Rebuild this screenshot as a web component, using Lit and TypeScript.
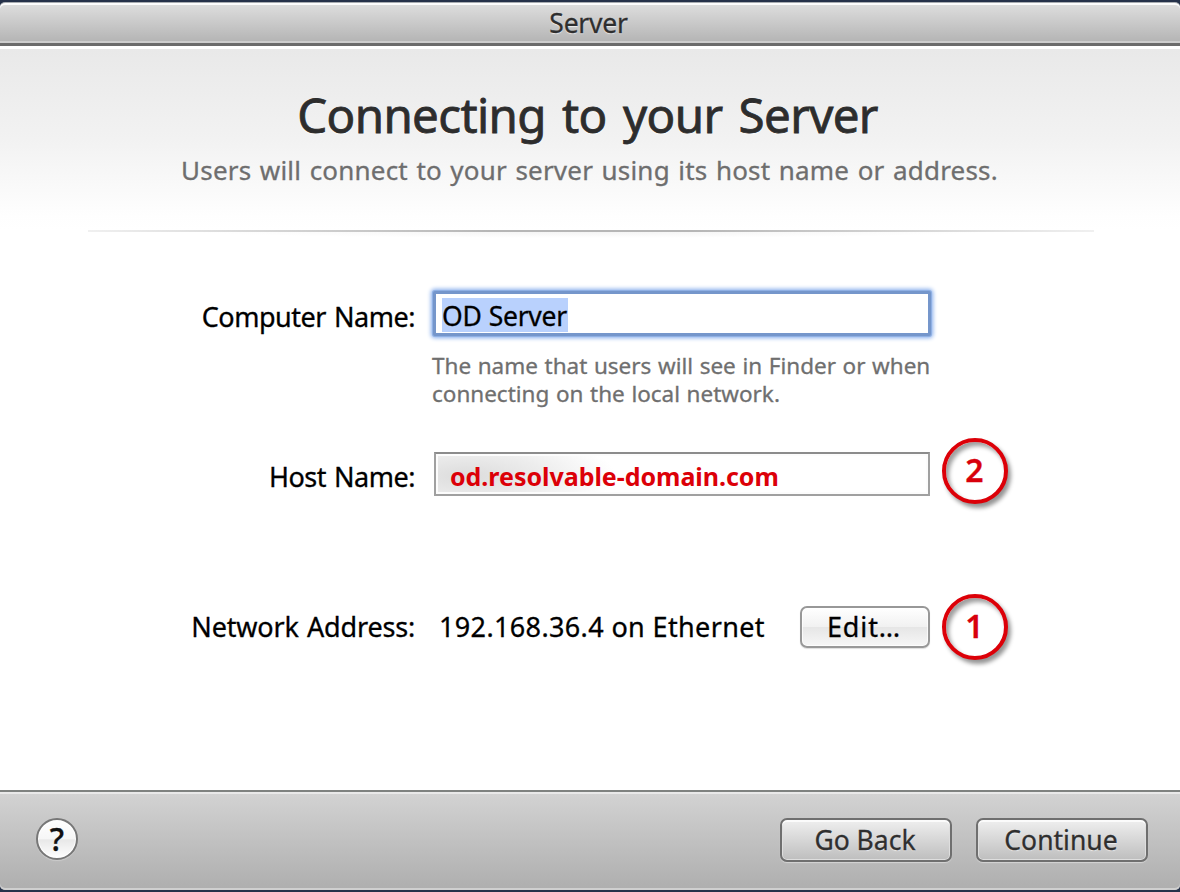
import { LitElement, html, css } from "lit";
import { customElement, property } from "lit/decorators.js";

@customElement("step-badge")
export class StepBadge extends LitElement {
  @property({ type: Number }) step = 1;

  static styles = css`
    :host {
      display: block;
      flex: none;
      width: 66px;
      height: 66px;
    }
    .ring {
      box-sizing: border-box;
      width: 66px;
      height: 66px;
      border: 4px solid #dc0008;
      border-radius: 50%;
      background: #fff;
      color: #d8000c;
      font-size: 32px;
      font-weight: 600;
      line-height: 56px;
      text-align: center;
      text-indent: -1px;
      box-shadow:
        3px 4px 4px rgba(0, 0, 0, 0.42),
        inset 3px 4px 4px rgba(0, 0, 0, 0.38);
    }
  `;

  render() {
    return html`<div class="ring">${this.step}</div>`;
  }
}

@customElement("app-root")
export class AppRoot extends LitElement {
  static styles = css`
    :host {
      display: block;
      width: 1180px;
      height: 892px;
      overflow: hidden;
      background: #26324a;
      font-family: "Noto Sans", "Open Sans", sans-serif;
      color: #000;
      -webkit-text-stroke: 0.3px currentColor;
    }
    * {
      box-sizing: border-box;
    }
    .window {
      display: flex;
      flex-direction: column;
      height: 892px;
      padding: 2px 0;
    }
    .titlebar {
      flex: none;
      height: 44px;
      border-top: 1px solid #a9adb2;
      border-bottom: 3px solid #6b6b6b;
      border-radius: 5px 5px 0 0;
      background: linear-gradient(#dfdfdf, #b3b3b3);
      box-shadow: inset 0 2px #fdfdfd, inset 0 -2px #cdcdcd;
      font-size: 26.5px;
      letter-spacing: -0.25px;
      line-height: 41px;
      text-align: center;
      color: #2e2e2e;
      text-shadow: 0 1px 1px #eee;
      padding-right: 3px;
    }
    .content {
      flex: 1;
      background: #fff;
    }
    .header {
      height: 184px;
      border-top: 3px solid #fff;
      background: linear-gradient(#e9e9e9, #f2f2f2 50%, #fefefe 92%, #fff);
      text-align: center;
      overflow: hidden;
    }
    h1 {
      margin: 33px 0 0;
      padding-right: 5px;
      font-size: 47.5px;
      font-weight: 400;
      letter-spacing: -0.63px;
      word-spacing: 4.5px;
      line-height: 66px;
      color: #2d2d2d;
      -webkit-text-stroke: 0.8px currentColor;
      text-shadow: 0 1px 2px #fff;
    }
    .sub {
      margin: 4px 0 0;
      padding-right: 1px;
      font-size: 26px;
      letter-spacing: 0.2px;
      word-spacing: 1.5px;
      line-height: 36px;
      color: #6e6e6e;
    }
    .rule {
      height: 2px;
      margin: 0 86px 0 88px;
      background: linear-gradient(90deg, #f0f0f0, #b6b6b6 40%, #b6b6b6 60%, #f0f0f0);
    }
    .fade {
      height: 6px;
      margin: 0 200px;
      background: radial-gradient(50% 100% at 50% 0, #f4f4f4, #fff);
    }
    .row {
      display: flex;
      align-items: center;
      font-size: 27px;
      white-space: nowrap;
    }
    .label {
      width: 415px;
      margin-right: 18px;
      text-align: right;
      letter-spacing: -0.48px;
      word-spacing: 1.5px;
    }
    .name {
      height: 45px;
      margin-top: 53px;
      line-height: 39px;
    }
    .name .label,
    .host .label {
      padding-top: 5px;
    }
    .host {
      height: 44px;
      margin-top: 44px;
      line-height: 39px;
    }
    .net {
      height: 42px;
      margin-top: 110px;
      line-height: 39px;
    }
    .net .label,
    .address {
      padding-bottom: 2px;
    }
    .net .label {
      letter-spacing: -0.18px;
    }
    .focus {
      display: flex;
      width: 498px;
      height: 45px;
      padding: 4px 6px;
      border: 3px solid #7596cb;
      border-radius: 2px;
      background: #fff;
      box-shadow: 0 0 0 1px #8fb0e4, 0 0 4px 2px #85acec;
    }
    .selected {
      height: 34px;
      padding-right: 1px;
      background: #b9d1fd;
      font-size: 26.5px;
      letter-spacing: -0.3px;
      word-spacing: 0.8px;
      line-height: 37px;
    }
    .hint {
      margin: 16px 0 0 432px;
      font-size: 22.5px;
      letter-spacing: -0.01px;
      word-spacing: 0.8px;
      line-height: 28px;
      color: #6f6f6f;
    }
    .field {
      width: 496px;
      height: 44px;
      margin-left: 1px;
      padding-left: 14px;
      border: 2px solid #a0a0a0;
      border-top-color: #8c8c8c;
      background:
        radial-gradient(150px 44px at 30px 22px, rgba(218, 218, 218, 0.95), rgba(230, 230, 230, 0.75) 50%, rgba(255, 255, 255, 0)),
        #fff;
      box-shadow: inset 0 0 0 2px #fcfcfc;
      color: #dc0008;
      font-size: 25px;
      font-weight: 700;
      letter-spacing: -0.03px;
      line-height: 45px;
      -webkit-text-stroke: 0;
    }
    .address {
      width: 367px;
      padding-left: 6px;
      letter-spacing: 0.36px;
    }
    step-badge {
      margin-left: 12px;
    }
    .host step-badge {
      margin-bottom: 6px;
    }
    .button {
      border: 2px solid #6f6f6f;
      border-radius: 7px;
      text-align: center;
      font-size: 27px;
      white-space: nowrap;
    }
    .edit {
      width: 130px;
      height: 42px;
      border-color: #989898;
      background: linear-gradient(#fff, #f1f1f1 50%, #e6e6e6 51%, #f6f6f6);
      box-shadow: inset 0 0 0 1px rgba(255, 255, 255, 0.7), 0 1px 1px #ddd;
      letter-spacing: 0.9px;
      line-height: 37px;
      padding-right: 2px;
    }
    .footer {
      flex: none;
      display: flex;
      align-items: center;
      height: 100px;
      padding: 0 32px 2px 36px;
      border-top: 2px solid #7f8280;
      border-radius: 0 0 5px 5px;
      background: linear-gradient(#d3d3d3, #aeaeae);
      box-shadow: inset 0 2px #e9e9e9, inset 0 -2px #cfcfcf;
    }
    .corners {
      flex: none;
      background: linear-gradient(#fff 50%, #26324a 50%);
    }
    .help {
      width: 42px;
      height: 42px;
      margin-right: auto;
      margin-bottom: 2px;
      border: 2px solid #777;
      border-radius: 50%;
      background: linear-gradient(#fff, #f6f6f6 50%, #e8e8e8 52%, #fff);
      box-shadow: inset 0 0 0 1px #fff, 0 1px 1px #ccc;
      text-align: center;
      font-size: 32px;
      font-weight: 500;
      line-height: 38px;
      color: #111;
    }
    .action {
      width: 172px;
      height: 44px;
      padding-right: 2px;
      background: linear-gradient(#efefef, #bebebe);
      box-shadow: inset 0 2px #fbfbfb, inset 0 0 0 1px #dedede, 0 1px 1px #d5d5d5;
      font-size: 26.5px;
      letter-spacing: 0;
      line-height: 41px;
      color: #2f2f2f;
      text-shadow: 0 1px 1px #eee;
    }
    .action + .action {
      margin-left: 24px;
    }
  `;

  render() {
    return html`
      <div class="window">
        <div class="titlebar">Server</div>
        <div class="content">
          <div class="header">
            <h1>Connecting to your Server</h1>
            <p class="sub">Users will connect to your server using its host name or address.</p>
          </div>
          <div class="rule"></div>
          <div class="fade"></div>
          <div class="row name">
            <div class="label">Computer Name:</div>
            <div class="focus"><span class="selected">OD Server</span></div>
          </div>
          <div class="hint">
            The name that users will see in Finder or when<br />connecting on the local network.
          </div>
          <div class="row host">
            <div class="label">Host Name:</div>
            <div class="field">od.resolvable-domain.com</div>
            <step-badge .step=${2}></step-badge>
          </div>
          <div class="row net">
            <div class="label">Network Address:</div>
            <div class="address">192.168.36.4 on Ethernet</div>
            <div class="button edit">Edit…</div>
            <step-badge .step=${1}></step-badge>
          </div>
        </div>
        <div class="corners">
          <div class="footer">
            <div class="help">?</div>
            <div class="button action">Go Back</div>
            <div class="button action">Continue</div>
          </div>
        </div>
      </div>
    `;
  }
}
